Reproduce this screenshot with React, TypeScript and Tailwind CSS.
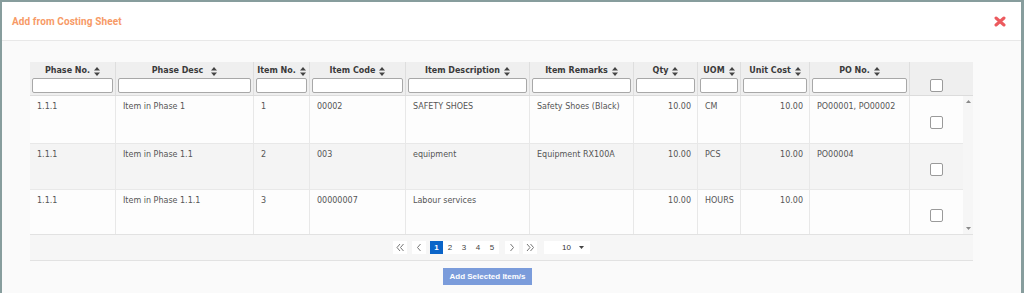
import React from "react";

const headW = ["w-[86px]", "w-[138px]", "w-[56px]", "w-[96px]", "w-[124px]", "w-[104px]", "w-[64px]", "w-[43px]", "w-[69px]", "w-[100px]"];
const heads = ["Phase No.", "Phase Desc", "Item No.", "Item Code", "Item Description", "Item Remarks", "Qty", "UOM", "Unit Cost", "PO No."];
const right = [false, false, false, false, false, false, true, false, true, false];

const rows = [
  { h: "h-[48px]", bg: "bg-[#fdfdfd]", c: ["1.1.1", "Item in Phase 1", "1", "00002", "SAFETY SHOES", "Safety Shoes (Black)", "10.00", "CM", "10.00", "PO00001, PO00002"] },
  { h: "h-[46px]", bg: "bg-[#f4f4f4]", c: ["1.1.1", "Item in Phase 1.1", "2", "003", "equipment", "Equipment RX100A", "10.00", "PCS", "10.00", "PO00004"] },
  { h: "h-[46px]", bg: "bg-[#fdfdfd]", c: ["1.1.1", "Item in Phase 1.1.1", "3", "00000007", "Labour services", "", "10.00", "HOURS", "10.00", ""] },
];

function SortIcon() {
  return (
    <svg width="6" height="9" viewBox="0 0 6 9" className="shrink-0">
      <path d="M3 0 L6 3.6 L0 3.6 Z" fill="#444" />
      <path d="M3 9 L6 5.4 L0 5.4 Z" fill="#444" />
    </svg>
  );
}

function Check() {
  return <div className="w-[13px] h-[13px] bg-white border border-[#9a9a9a] rounded-[2px]" />;
}

function PgBtn({ children, active }: { children: React.ReactNode; active?: boolean }) {
  return (
    <div
      className={
        active
          ? "w-[13px] h-[13px] flex items-center justify-center bg-[#0a64c8] text-white text-[8px] font-bold"
          : "w-[14px] h-[13px] flex items-center justify-center bg-white text-[#444] text-[8px]"
      }
    >
      {children}
    </div>
  );
}

function Chev({ dir, double }: { dir: "l" | "r"; double?: boolean }) {
  const pts = dir === "l" ? ["5,1 2,4.5 5,8", "8.5,1 5.5,4.5 8.5,8"] : ["2,1 5,4.5 2,8", "5.5,1 8.5,4.5 5.5,8"];
  const single = dir === "l" ? "6.5,1 3.5,4.5 6.5,8" : "3.5,1 6.5,4.5 3.5,8";
  return (
    <svg width="10" height="9" viewBox="0 0 10 9">
      {double ? (
        pts.map((p) => <polyline key={p} points={p} fill="none" stroke="#666" strokeWidth="0.9" />)
      ) : (
        <polyline points={single} fill="none" stroke="#666" strokeWidth="0.9" />
      )}
    </svg>
  );
}

export default function App() {
  return (
    <div className="w-[1024px] h-[293px] overflow-hidden bg-[#879d9d] pt-[2px] pl-[2px] pr-[3px]">
      <div className="h-full bg-[#fafafa]">
        <div className="h-[39px] bg-white border-b border-[#e8e8e8] flex items-center justify-between pl-[10px] pr-[15px]">
          <div className="text-[10px] font-bold text-[#f79a66] tracking-[0.1px] pt-[1px]" style={{ fontFamily: "Roboto, 'Open Sans', sans-serif" }}>
            Add from Costing Sheet
          </div>
          <svg width="12" height="11" viewBox="0 0 12 11">
            <path d="M2 2 L10 9 M10 2 L2 9" stroke="#ec5a5e" strokeWidth="3" strokeLinecap="round" />
          </svg>
        </div>
        <div className="pl-[28px] pt-[21px]" style={{ fontFamily: "'DejaVu Sans', Verdana, sans-serif" }}>
          <div className="w-[943px] border-b border-[#e2e2e2] bg-white">
            <div className="flex h-[34px] bg-[#efefef] border-b border-[#dcdcdc]">
              {heads.map((h, i) => (
                <div key={h} className={`${headW[i]} border-r border-[#dedede] flex flex-col items-center pt-[4px] px-[2px]`}>
                  <div className="flex items-center gap-[4px] h-[10px] text-[8px] font-bold text-[#3a3a3a] leading-[10px]">
                    <span className={i === 1 ? "mr-[4px]" : ""}>{h}</span>
                    <SortIcon />
                  </div>
                  <div className="mt-[2px] w-full h-[15px] bg-white border border-[#a8a8a8] rounded-[2px]" />
                </div>
              ))}
              <div className="w-[63px] flex items-end justify-center pr-[10px] pb-[3px]">
                <Check />
              </div>
            </div>
            <div className="flex h-[139px] overflow-hidden border-b border-[#e2e2e2]">
              <div className="w-[933px]">
                {rows.map((r, ri) => (
                  <div key={ri} className={`flex ${r.h} ${r.bg} border-b border-[#e8e8e8]`}>
                    {r.c.map((c, i) => (
                      <div
                        key={i}
                        className={`${headW[i]} border-r border-[#e8e8e8] pt-[6px] ${right[i] ? "text-right pr-[6px]" : "pl-[7px]"} text-[8px] leading-[10px] text-[#555]`}
                      >
                        {c}
                      </div>
                    ))}
                    <div className="w-[53px] flex items-center justify-center pt-[5px]">
                      <Check />
                    </div>
                  </div>
                ))}
              </div>
              <div className="w-[10px] bg-[#f6f6f6] flex flex-col items-center justify-between py-[4px]">
                <svg width="5" height="3" viewBox="0 0 5 3">
                  <path d="M2.5 0 L5 3 L0 3 Z" fill="#8a8a8a" />
                </svg>
                <svg width="5" height="3" viewBox="0 0 5 3">
                  <path d="M2.5 3 L5 0 L0 0 Z" fill="#8a8a8a" />
                </svg>
              </div>
            </div>
            <div className="h-[25px] bg-[#f6f6f6] flex items-center justify-center pr-[20px]" style={{ fontFamily: "'Liberation Sans', Arial, sans-serif" }}>
              <PgBtn><Chev dir="l" double /></PgBtn>
              <div className="w-[5px]" />
              <PgBtn><Chev dir="l" /></PgBtn>
              <div className="w-[4px]" />
              <PgBtn active>1</PgBtn>
              <PgBtn>2</PgBtn>
              <PgBtn>3</PgBtn>
              <PgBtn>4</PgBtn>
              <PgBtn>5</PgBtn>
              <div className="w-[6px]" />
              <PgBtn><Chev dir="r" /></PgBtn>
              <div className="w-[4px]" />
              <PgBtn><Chev dir="r" double /></PgBtn>
              <div className="w-[7px]" />
              <div className="w-[46px] h-[13px] bg-white flex items-center justify-end pr-[6px] gap-[8px] text-[8px] text-[#333]">
                <span>10</span>
                <svg width="5" height="3" viewBox="0 0 5 3">
                  <path d="M0 0 L5 0 L2.5 3 Z" fill="#444" />
                </svg>
              </div>
            </div>
          </div>
          <div className="w-[943px] flex justify-center pr-[28px] mt-[7px]">
            <div
              className="w-[89px] h-[17px] bg-[#7b9cdb] flex items-center justify-center text-white text-[8px] font-bold"
              style={{ fontFamily: "'Liberation Sans', Arial, sans-serif" }}
            >
              Add Selected Item/s
            </div>
          </div>
        </div>
      </div>
    </div>
  );
}
